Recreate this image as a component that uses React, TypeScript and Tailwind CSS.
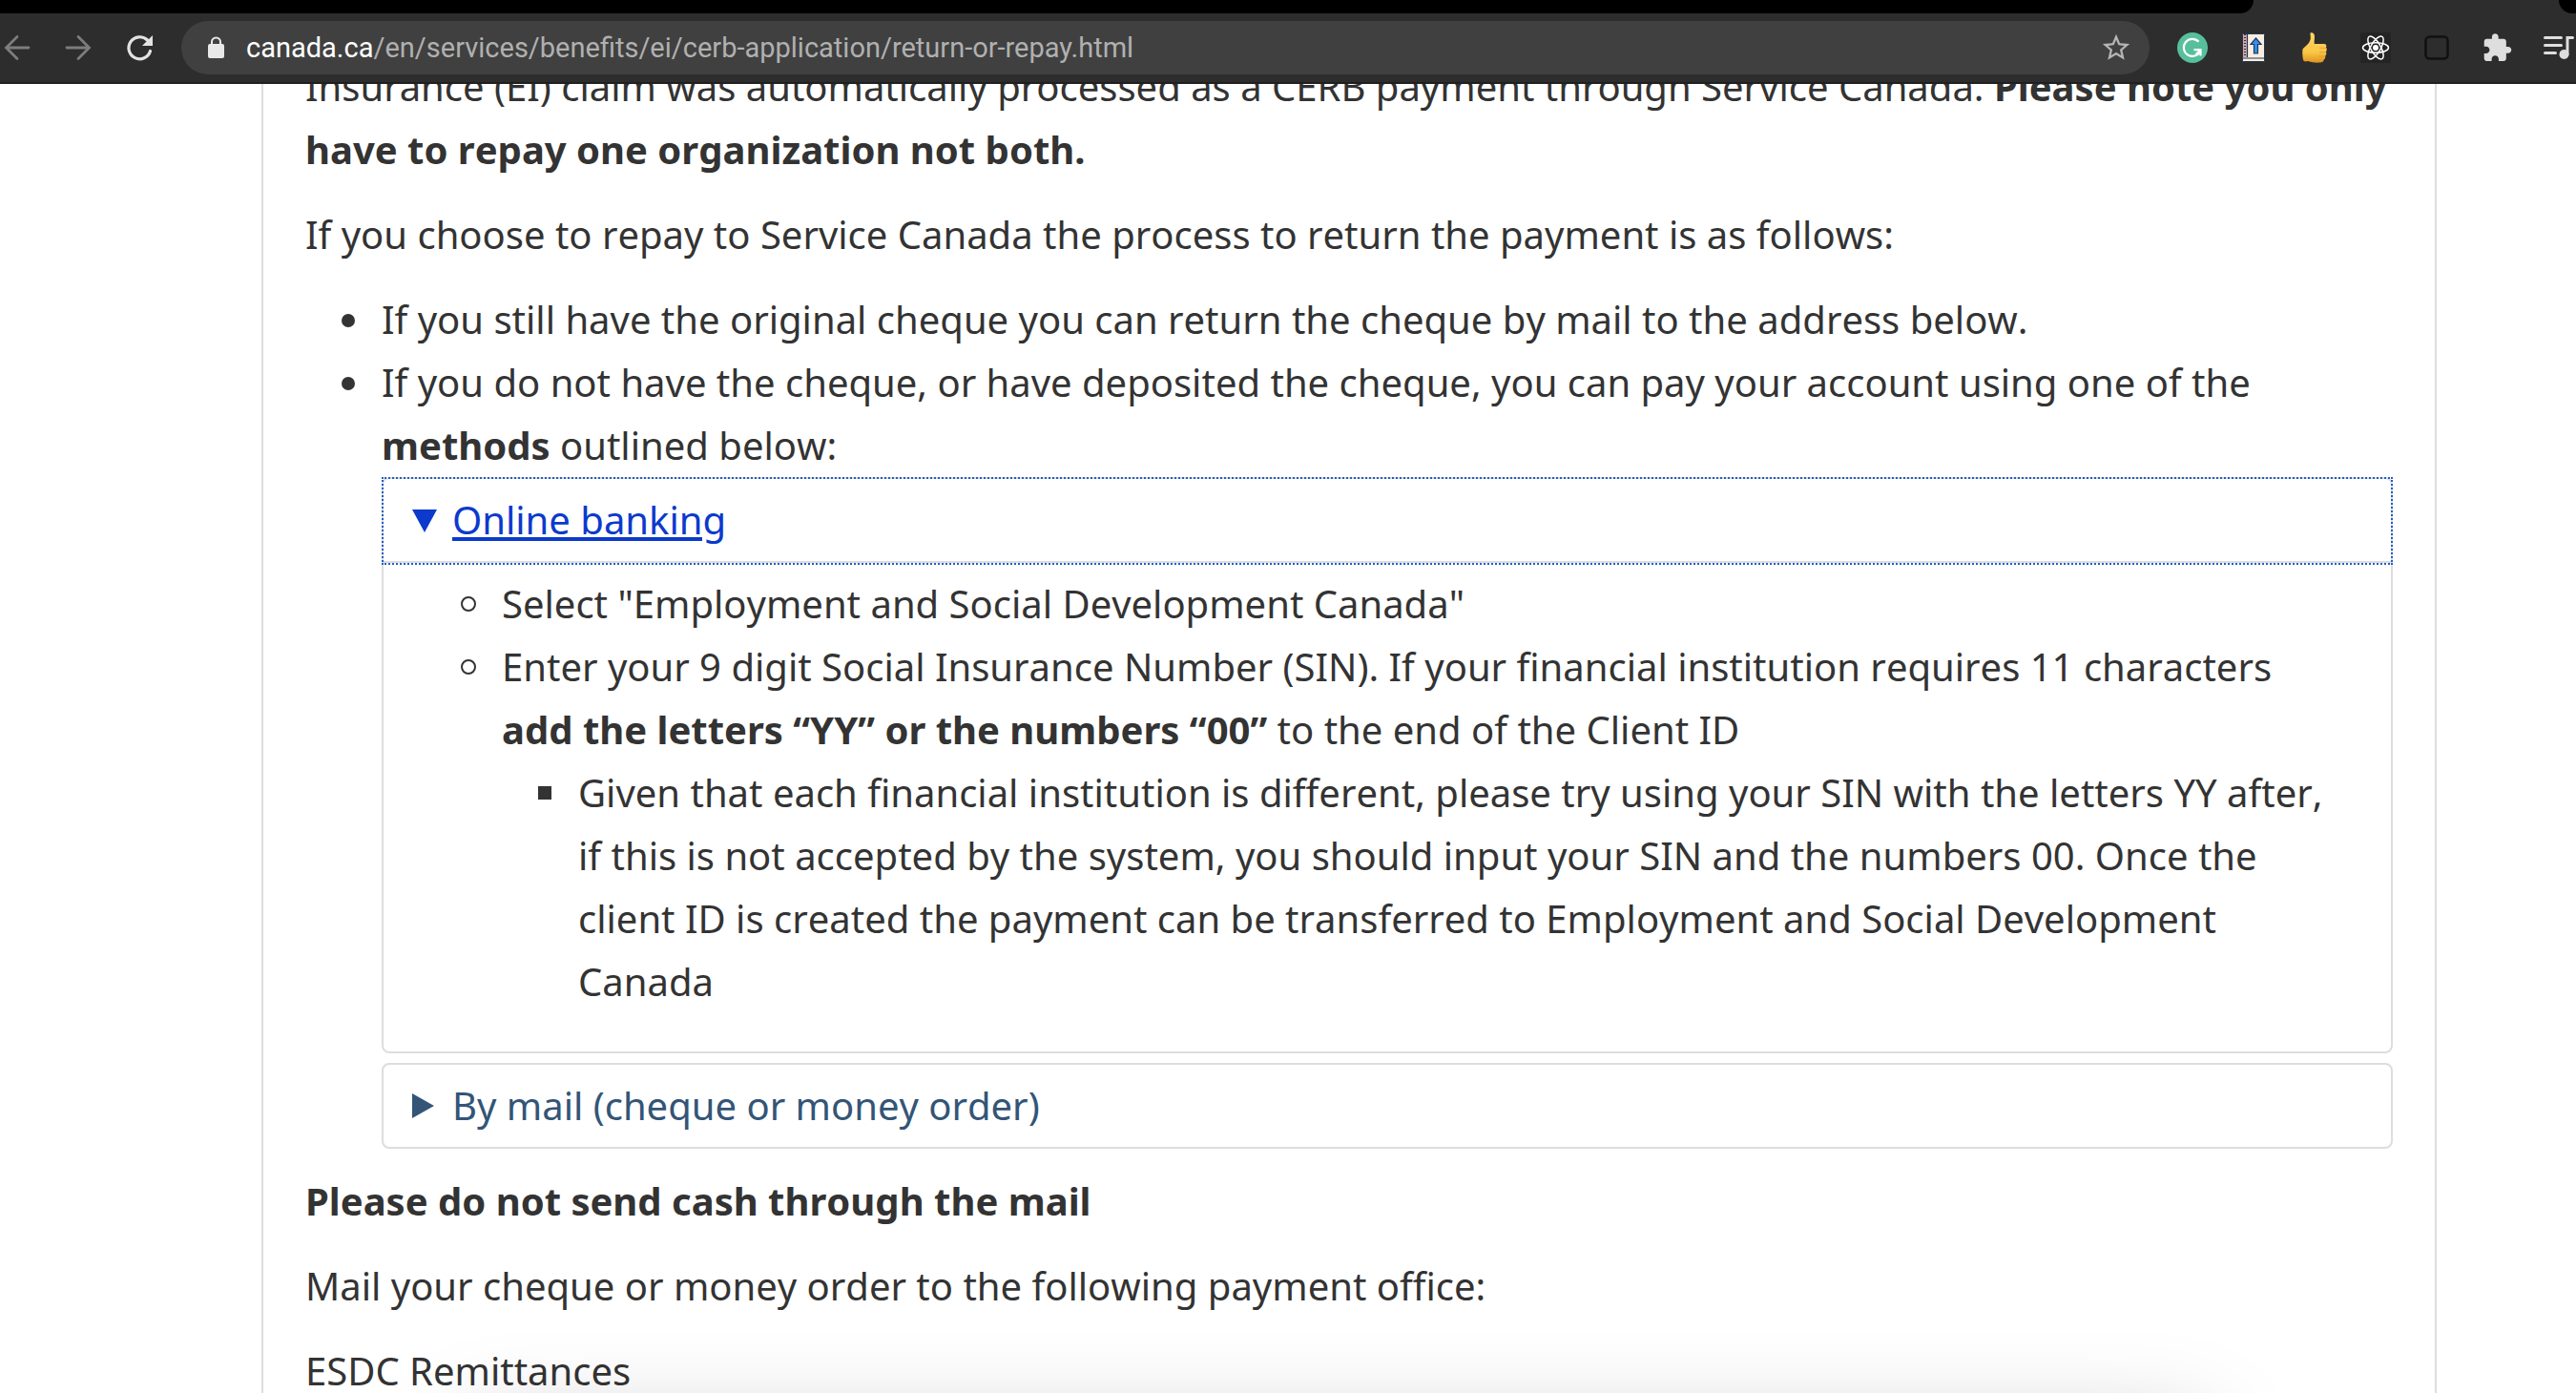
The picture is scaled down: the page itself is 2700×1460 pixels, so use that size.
import React from "react";

const disc =
  "relative before:absolute before:top-[27px] before:-left-[42px] before:size-3.5 before:rounded-full before:bg-[#333333]";
const circle =
  "relative before:absolute before:top-[25px] before:-left-[43px] before:size-4 before:rounded-full before:border-2 before:border-[#333333]";
const square = "relative before:absolute before:top-[26px] before:-left-[42px] before:size-3.5 before:bg-[#333333]";

const extensionIcons = [
  {
    label: "Grammarly",
    art: (
      <>
        <circle cx="16" cy="16" r="16" fill="#57bf9c" />
        <path d="M22.500 9.800A9 9 0 1 0 24.300 19" fill="none" stroke="#fff" strokeWidth="2.200" />
        <path d="M17.500 18.200H24.500V24.500" fill="none" stroke="#fff" strokeWidth="2.200" />
        <path d="M24.500 18.200L19.500 23" fill="none" stroke="#fff" strokeWidth="2" />
      </>
    ),
  },
  {
    label: "Notebook",
    art: (
      <>
        <rect x="4.500" y="1.500" width="23" height="29" rx="1" fill="#faeee0" stroke="#22364f" />
        <rect x="5" y="2" width="4" height="24" fill="#d9a5a8" />
        <path d="M7 2V26" stroke="#22364f" strokeWidth="2" strokeDasharray="1 2" />
        <path d="M9.500 2V26M4 27H28" stroke="#22364f" strokeWidth="1.200" />
        <path d="M18.500 6L24 12.500H20.500V22H16.500V12.500H13Z" fill="#3b8eea" stroke="#173a66" strokeWidth="1.200" />
      </>
    ),
  },
  {
    label: "Thumbs up",
    art: (
      <>
        <defs>
          <linearGradient id="thumb" x1="0" y1="0" x2="0" y2="1">
            <stop offset="0" stopColor="#ffd766" />
            <stop offset="0.650" stopColor="#fbc646" />
            <stop offset="1" stopColor="#dd9320" />
          </linearGradient>
        </defs>
        <path
          d="M11.500 0.500C14 -0.200 15.800 1 16 4C16.100 7 15.300 9.500 15.800 12H26C28.200 12 28.900 14 28 15.800C29.100 17 29 19 27.900 20.200C28.700 21.500 28.400 23.600 27.200 24.600C27.600 26 27 27.800 25.800 28.500C25.500 30.500 24 31.500 22 31.600C17 32 13 31.500 9 30C6.500 31 4.300 30.500 4 28.500C3.300 25 3 21 3.500 17.500C5 15.500 8 13.500 10 11C11.500 8.500 12.300 6 11.600 3Z"
          fill="url(#thumb)"
        />
        <path d="M21 16.300H27.800M21 20.700H27.800M20.500 25H27" stroke="#d9982b" strokeWidth="0.700" />
      </>
    ),
  },
  {
    label: "React Developer Tools",
    art: (
      <>
        <rect width="32" height="32" rx="2" fill="#242424" />
        <circle cx="16" cy="16" r="3" fill="#fff" />
        <g fill="none" stroke="#fff" strokeWidth="1.500">
          <ellipse cx="16" cy="16" rx="13.500" ry="5.200" />
          <ellipse cx="16" cy="16" rx="13.500" ry="5.200" transform="rotate(60 16 16)" />
          <ellipse cx="16" cy="16" rx="13.500" ry="5.200" transform="rotate(120 16 16)" />
        </g>
      </>
    ),
  },
  {
    label: "Frame",
    art: <rect x="4.500" y="4.500" width="23" height="23" rx="4" fill="none" stroke="#111111" strokeWidth="2.500" />,
  },
  {
    label: "Extensions",
    art: (
      <path
        transform="translate(-1 0) scale(1.360)"
        fill="#dedede"
        d="M20.500 11H19V7c0-1.100-.9-2-2-2h-4V3.500C13 2.120 11.880 1 10.500 1S8 2.120 8 3.500V5H4c-1.100 0-1.990.9-1.990 2v3.800H3.500c1.490 0 2.700 1.210 2.700 2.700s-1.210 2.700-2.700 2.700H2V20c0 1.100.9 2 2 2h3.800v-1.500c0-1.490 1.210-2.700 2.700-2.700 1.490 0 2.700 1.210 2.700 2.700V22H17c1.100 0 2-.9 2-2v-4h1.500c1.380 0 2.500-1.120 2.500-2.500S21.880 11 20.500 11z"
      />
    ),
  },
  {
    label: "Media controls",
    art: (
      <>
        <path
          d="M1.500 5.500H18.500M1.500 13.500H18.500M1.500 21.500H12.500"
          stroke="#dedede"
          strokeWidth="3"
          strokeLinecap="round"
        />
        <circle cx="21.500" cy="23" r="5" fill="#dedede" />
        <path d="M25 23V5.500H30.500" fill="none" stroke="#dedede" strokeWidth="3" strokeLinecap="round" />
      </>
    ),
  },
];

function Toolbar() {
  return (
    <header className="shrink-0 border-b-2 border-[#1f1f1f] bg-[#2d2d2d]">
      <div className="flex h-3.5 gap-80">
        <div className="flex-1 rounded-br-[14px] bg-black" />
        <div className="w-[18px] shrink-0 rounded-bl-[14px] bg-black" />
      </div>
      <div className="flex h-[72px] items-center">
        <nav className="flex w-[190px] shrink-0 items-center" aria-label="History">
          <button aria-label="Back" className="ml-1 w-7">
            <svg
              width="28"
              height="28"
              viewBox="0 0 28 28"
              fill="none"
              stroke="#7d7d7d"
              strokeWidth="2.800"
              strokeLinecap="round"
            >
              <path d="M26 14H3M14 2.500L2.500 14L14 25.500" />
            </svg>
          </button>
          <button aria-label="Forward" className="ml-9 w-7">
            <svg
              width="28"
              height="28"
              viewBox="0 0 28 28"
              fill="none"
              stroke="#7d7d7d"
              strokeWidth="2.800"
              strokeLinecap="round"
            >
              <path d="M2 14H25M14 2.500L25.500 14L14 25.500" />
            </svg>
          </button>
          <button aria-label="Reload" className="ml-9 w-8">
            <svg width="30" height="30" viewBox="0 0 30 30">
              <path
                d="M25.500 18.500A11.500 11.500 0 1 1 22.500 7"
                fill="none"
                stroke="#e2e2e2"
                strokeWidth="3.200"
                strokeLinecap="round"
              />
              <path d="M28 2V13H17Z" fill="#e2e2e2" />
            </svg>
          </button>
        </nav>
        <div className="flex h-14 flex-1 items-center rounded-full bg-[#404040] pr-[18px] pl-7">
          <svg width="17" height="24" viewBox="0 0 17 24" className="shrink-0">
            <path d="M4 10V6a4.500 4.500 0 0 1 9 0V10" fill="none" stroke="#e8e8e8" strokeWidth="2" />
            <rect x="0" y="8" width="17" height="15" rx="2" fill="#e8e8e8" />
          </svg>
          <div className="ml-[23px] flex-1 font-['Roboto',sans-serif] text-[29px] leading-10 whitespace-nowrap text-[#b0b0b0]">
            <span className="text-white">canada.ca</span>/en/services/benefits/ei/cerb-application/return-or-repay.html
          </div>
          <button aria-label="Bookmark this page">
            <svg width="34" height="34" viewBox="0 0 24 24" fill="#b5b5b5">
              <path d="M22 9.240l-7.190-.62L12 2 9.190 8.630 2 9.240l5.460 4.730L5.820 21 12 17.270 18.180 21l-1.630-7.030L22 9.240zM12 15.400l-3.760 2.270 1-4.280-3.320-2.880 4.380-.38L12 6.100l1.710 4.040 4.380.38-3.320 2.880 1 4.280L12 15.400z" />
            </svg>
          </button>
        </div>
        <div className="flex w-[447px] shrink-0 items-center gap-8 pl-[29px]">
          {extensionIcons.map((icon) => (
            <button key={icon.label} aria-label={icon.label} className="size-8 shrink-0">
              <svg width="32" height="32" viewBox="0 0 32 32" overflow="visible">
                {icon.art}
              </svg>
            </button>
          ))}
        </div>
      </div>
    </header>
  );
}

function Article() {
  return (
    <article className="-mt-[30px] mr-[146px] ml-[274px] min-h-full border-x-2 border-[#dddddd] px-11 font-['Noto_Sans',sans-serif] text-[40px] leading-[66px] text-[#333333] [font-kerning:none]">
      <p className="mb-[23px]">
        Insurance (EI) claim was automatically processed as a CERB payment through Service Canada.{" "}
        <strong>Please note you only have to repay one organization not both.</strong>
      </p>
      <p className="mb-[23px]">If you choose to repay to Service Canada the process to return the payment is as follows:</p>
      <ul className="pl-20">
        <li className={disc}>
          If you still have the original cheque you can return the cheque by mail to the address below.
        </li>
        <li className={disc}>
          If you do not have the cheque, or have deposited the cheque, you can pay your account using one of the{" "}
          <strong>methods</strong> outlined below:
          <details open className="rounded-lg border-2 border-[#dddddd]">
            <summary className="flex cursor-pointer list-none items-center border-b-2 border-[#dddddd] px-[30px] py-2.5 text-[#0b3acd] outline-2 outline-[#1f5fc8] outline-dotted">
              <svg width="26" height="26" viewBox="0 0 26 26" fill="currentColor" className="mr-4 shrink-0">
                <path d="M0 2H26L13 26Z" />
              </svg>
              <span className="underline decoration-4 underline-offset-[3px]">Online banking</span>
            </summary>
            <ul className="pt-2.5 pr-[54px] pb-10 pl-[124px]">
              <li className={circle}>Select "Employment and Social Development Canada"</li>
              <li className={circle}>
                Enter your 9 digit Social Insurance Number (SIN). If your financial institution requires 11 characters{" "}
                <strong>add the letters “YY” or the numbers “00”</strong> to the end of the Client ID
                <ul className="pl-20">
                  <li className={square}>
                    Given that each financial institution is different, please try using your SIN with the letters YY
                    after, if this is not accepted by the system, you should input your SIN and the numbers 00. Once the
                    client ID is created the payment can be transferred to Employment and Social Development Canada
                  </li>
                </ul>
              </li>
            </ul>
          </details>
          <details className="mt-2.5 rounded-lg border-2 border-[#dddddd]">
            <summary className="flex cursor-pointer list-none items-center px-[30px] py-2.5 text-[#335577]">
              <svg width="26" height="26" viewBox="0 0 26 26" fill="currentColor" className="mr-4 shrink-0">
                <path d="M0 0L23 13L0 26Z" />
              </svg>
              By mail (cheque or money order)
            </summary>
          </details>
        </li>
      </ul>
      <p className="mt-[22px] mb-[23px] font-bold">Please do not send cash through the mail</p>
      <p className="mb-[23px]">Mail your cheque or money order to the following payment office:</p>
      <p>ESDC Remittances</p>
    </article>
  );
}

export default function App() {
  return (
    <div className="relative flex h-screen flex-col overflow-hidden bg-white">
      <Toolbar />
      <main className="min-h-0 flex-1 overflow-hidden">
        <Article />
      </main>
      <div className="pointer-events-none absolute inset-x-0 top-full mt-10 mr-[390px] ml-[490px] h-40 shadow-[0_0_100px_rgba(0,0,0,0.25)]" />
    </div>
  );
}
